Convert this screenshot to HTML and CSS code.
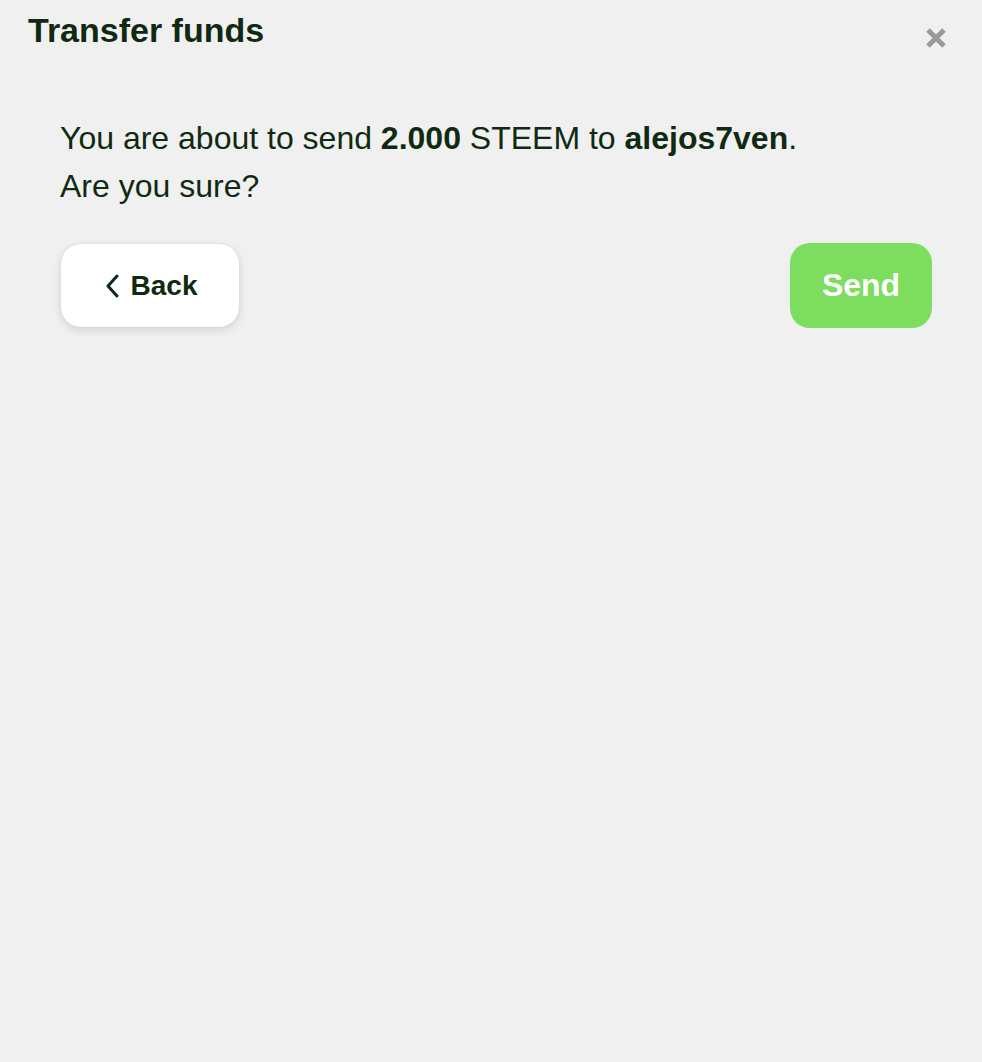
FILE: index.html
```html
<!DOCTYPE html>
<html>
<head>
<meta charset="utf-8">
<link rel="stylesheet" href="styles.css">
</head>
<body>
<div class="modal">
  <div class="header">
    <h1 class="title">Transfer funds</h1>
    <button class="close" aria-label="Close">
      <svg width="22" height="22" viewBox="0 0 22 22"><path d="M3 3 L19 19 M19 3 L3 19" stroke="#9a9a9a" stroke-width="5" stroke-linecap="butt"/></svg>
    </button>
  </div>
  <div class="body">
    <p class="message">You are about to send <b>2.000</b> STEEM to <b>alejos7ven</b>.<br>Are you sure?</p>
    <div class="actions">
      <button class="btn btn-back">
        <svg class="chev" width="14" height="24" viewBox="0 0 14 24"><path d="M12 2 L3 12 L12 22" fill="none" stroke="#0f2a10" stroke-width="3" stroke-linecap="round" stroke-linejoin="round"/></svg>
        <span>Back</span>
      </button>
      <button class="btn btn-send">Send</button>
    </div>
  </div>
</div>
</body>
</html>
```
FILE: styles.css
```css
html, body {
  margin: 0;
  padding: 0;
  background: #f0f0f0;
}
body {
  font-family: "Liberation Sans", Arial, sans-serif;
  color: #0f2a10;
  width: 982px;
  height: 1062px;
}
.modal {
  padding: 10px 35px 0 28px;
}
.header {
  display: flex;
  justify-content: space-between;
  align-items: flex-start;
}
.title {
  margin: 0;
  font-size: 34px;
  font-weight: bold;
  line-height: 40px;
}
.close {
  background: none;
  border: 0;
  padding: 0;
  margin-top: 17px;
  width: 22px;
  height: 22px;
  cursor: pointer;
}
.close svg { display: block; }
.body {
  padding: 64px 15px 0 32px;
}
.message {
  margin: 0;
  font-size: 32px;
  line-height: 48px;
}
.message b { font-weight: bold; }
.actions {
  display: flex;
  justify-content: space-between;
  align-items: center;
  margin-top: 33px;
}
.btn {
  font-family: "Liberation Sans", Arial, sans-serif;
  font-weight: bold;
  border: 0;
  border-radius: 20px;
  cursor: pointer;
}
.btn-back {
  background: #fff;
  color: #0f2a10;
  width: 178px;
  height: 83px;
  font-size: 28px;
  display: flex;
  align-items: center;
  justify-content: center;
  gap: 12px;
  padding: 0 0 0 2px;
  box-shadow: 0 3px 10px rgba(0,0,0,0.12), 0 0 2px rgba(0,0,0,0.08);
  margin-left: 1px;
}
.chev { display: block; }
.btn-send {
  background: #7ddd5f;
  color: #fff;
  width: 142px;
  height: 85px;
  font-size: 32px;
}
```
